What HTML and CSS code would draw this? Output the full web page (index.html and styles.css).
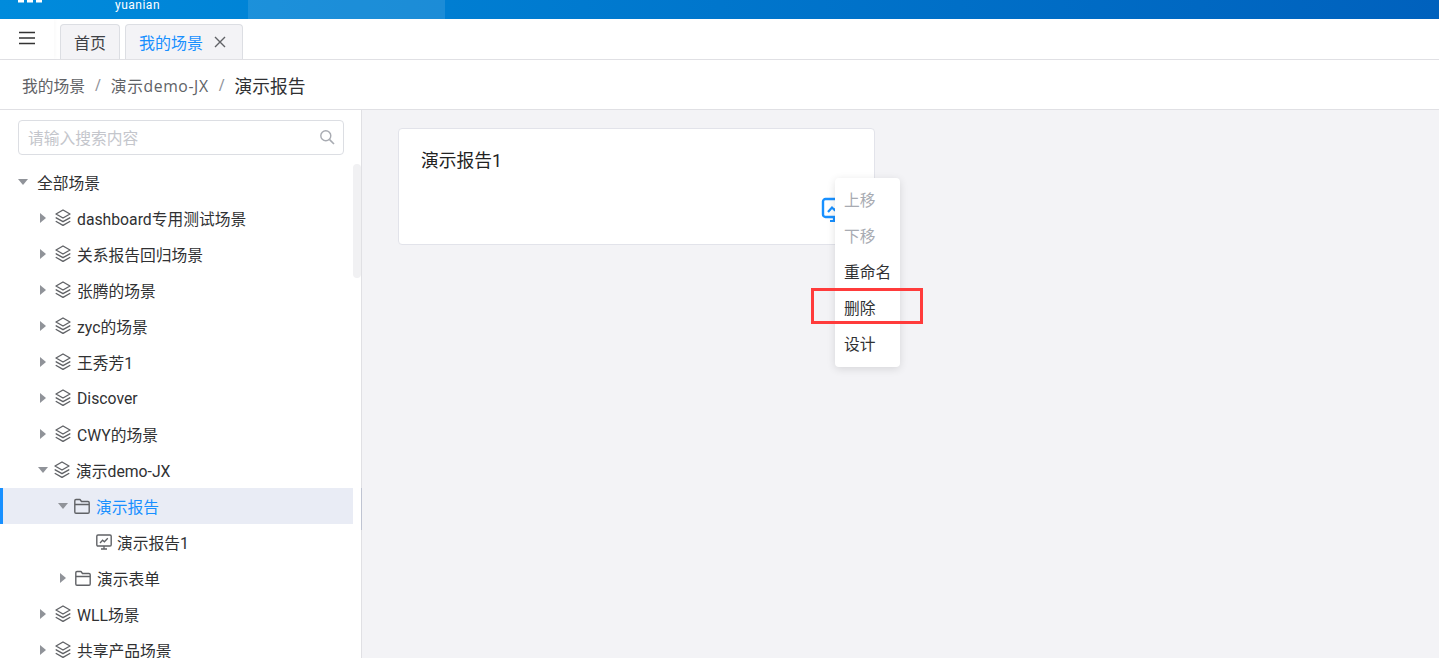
FILE: index.html
```html
<!DOCTYPE html>
<html lang="zh-CN">

<head>
  <meta charset="UTF-8" />
  <meta name="viewport" content="width=device-width, initial-scale=1.0" />
  <title>我的场景</title>
  <link rel="stylesheet" href="styles.css">
</head>

<body>
  <svg class="defs" width="0" height="0">
    <symbol id="layers" viewBox="0 0 16 18">
      <path d="M8 1 15 5 8 9 1 5Z" fill="none" stroke="currentColor" stroke-width="1.4" stroke-linejoin="round" />
      <path d="M1.200 8.800 8 12.700 14.800 8.800M1.200 12.500 8 16.400 14.800 12.500" fill="none" stroke="currentColor" stroke-width="1.4" stroke-linecap="round" stroke-linejoin="round" />
    </symbol>
    <symbol id="folder" viewBox="0 0 16 18">
      <path d="M.8 3.800C.8 3 1.300 2.500 2 2.500H6L7.500 4.500H14C14.700 4.500 15.200 5 15.200 5.700V15C15.200 15.700 14.700 16.200 14 16.200H2C1.300 16.200 .8 15.700 .8 15ZM.8 7.500H15.200" fill="none" stroke="currentColor" stroke-width="1.4" stroke-linejoin="round" />
    </symbol>
    <symbol id="report" viewBox="0 0 16 18">
      <rect x=".8" y="2" width="14.400" height="11" rx="1.200" fill="none" stroke="currentColor" stroke-width="1.400" />
      <path d="M4 10 6.600 7.200 8.400 8.800 11.800 5.200M5 16H11M8 13V16" fill="none" stroke="currentColor" stroke-width="1.300" />
    </symbol>
  </svg>

  <!-- top bar, page is scrolled so only the bottom of it shows -->
  <header class="topbar">
    <svg class="logo" width="24" height="3" viewBox="0 0 24 3">
      <path d="M0 0H6V2.500H0ZM9 0H15V2.500H9ZM18 0H24V2.500H18Z" fill="#fff" />
    </svg>
    <div class="brand">yuanian</div>
    <div class="topnav"><span>智能分析平台</span></div>
  </header>

  <div class="tabbar">
    <div class="menu-btn">
      <svg width="16" height="14" viewBox="0 0 16 14">
        <path d="M0 1.500H16M0 7H16M0 12.500H16" stroke="#333" stroke-width="1.600" />
      </svg>
    </div>
    <div class="tab">首页</div>
    <div class="tab tab-active">我的场景
      <svg class="tab-close" width="12" height="12" viewBox="0 0 12 12">
        <path d="M1 1 11 11M11 1 1 11" stroke="#606266" stroke-width="1.400" />
      </svg>
    </div>
  </div>

  <div class="breadcrumb">
    <span>我的场景</span><i>/</i><span class="crumb-wide">演示demo-JX</span><i>/</i><span class="current">演示报告</span>
  </div>

  <div class="main">
    <aside class="sidebar">
      <div class="search">
        <span>请输入搜索内容</span>
        <svg width="16" height="16" viewBox="0 0 16 16">
          <circle cx="6.800" cy="6.800" r="5" fill="none" stroke="#a8abb2" stroke-width="1.400" />
          <path d="M10.600 10.600 15 15" stroke="#a8abb2" stroke-width="1.600" />
        </svg>
      </div>

      <ul class="tree">
        <li class="row lv0"><b class="arrow down"></b>全部场景</li>
        <li class="row lv1"><b class="arrow"></b><svg class="ico"><use href="#layers" /></svg>dashboard专用测试场景</li>
        <li class="row lv1"><b class="arrow"></b><svg class="ico"><use href="#layers" /></svg>关系报告回归场景</li>
        <li class="row lv1"><b class="arrow"></b><svg class="ico"><use href="#layers" /></svg>张腾的场景</li>
        <li class="row lv1"><b class="arrow"></b><svg class="ico"><use href="#layers" /></svg>zyc的场景</li>
        <li class="row lv1"><b class="arrow"></b><svg class="ico"><use href="#layers" /></svg>王秀芳1</li>
        <li class="row lv1"><b class="arrow"></b><svg class="ico"><use href="#layers" /></svg>Discover</li>
        <li class="row lv1"><b class="arrow"></b><svg class="ico"><use href="#layers" /></svg>CWY的场景</li>
        <li class="row lv1"><b class="arrow down"></b><svg class="ico"><use href="#layers" /></svg>演示demo-JX</li>
        <li class="row lv2 selected"><b class="arrow down"></b><svg class="ico"><use href="#folder" /></svg>演示报告</li>
        <li class="row lv3"><svg class="ico"><use href="#report" /></svg>演示报告1</li>
        <li class="row lv2"><b class="arrow"></b><svg class="ico"><use href="#folder" /></svg>演示表单</li>
        <li class="row lv1"><b class="arrow"></b><svg class="ico"><use href="#layers" /></svg>WLL场景</li>
        <li class="row lv1"><b class="arrow"></b><svg class="ico"><use href="#layers" /></svg>共享产品场景</li>
      </ul>

      <div class="scrollbar"></div>
      <div class="collapse">
        <svg width="8" height="14" viewBox="0 0 8 14">
          <path d="M6 1.500 2 7 6 12.500" fill="none" stroke="#fff" stroke-width="2" />
        </svg>
      </div>
    </aside>

    <section class="content">
      <div class="card">
        <div class="card-title">演示报告1</div>
        <svg class="card-icon" width="26" height="26" viewBox="0 0 26 26">
          <rect x="2" y="2" width="22" height="18" rx="2.500" fill="none" stroke="#1890ff" stroke-width="2.400" />
          <path d="M7 15 11 10.500 13.500 13 18 8M9 24H17M13 20V24" fill="none" stroke="#1890ff" stroke-width="2.200" />
        </svg>
      </div>

      <ul class="popmenu">
        <li class="disabled">上移</li>
        <li class="disabled">下移</li>
        <li>重命名</li>
        <li>删除</li>
        <li>设计</li>
      </ul>
      <div class="redbox"></div>
    </section>
  </div>
</body>

</html>
```

FILE: styles.css
```css
/* Reset some default styles */
* {
    margin: 0;
    padding: 0;
    box-sizing: border-box;
}

html,
body {
    height: 100%;
    overflow: hidden;
}

body {
    display: flex;
    flex-direction: column;
    background-color: #fff;
    color: #303133;
    font-family: Roboto, "Noto Sans CJK SC", sans-serif;
    font-size: 15.75px;
}

.defs {
    position: absolute;
}

/* Top bar */
.topbar {
    height: 19px;
    flex: none;
    display: flex;
    align-items: flex-end;
    overflow: hidden;
    background: linear-gradient(90deg, #008bdc 0%, #0076cc 50%, #0061bd 100%);
    color: #fff;
}

.logo {
    align-self: flex-start;
    margin-left: 18px;
}

.brand {
    width: 206px;
    padding-left: 73px;
    padding-bottom: 7px;
    font-size: 12px;
    line-height: 14px;
    letter-spacing: 0.5px;
}

.topnav {
    width: 197px;
    height: 19px;
    background-color: rgba(255, 255, 255, 0.11);
    text-align: center;
}

.topnav span {
    display: block;
    margin-top: -23px;
    line-height: 24px;
    font-size: 15px;
}

/* Tabs */
.tabbar {
    height: 41px;
    flex: none;
    display: flex;
    align-items: flex-end;
    border-bottom: 1px solid #e0e0e4;
}

.menu-btn {
    width: 54px;
    height: 40px;
    margin-right: 6px;
    display: flex;
    justify-content: center;
    align-items: center;
    padding-bottom: 3px;
    padding-right: 1px;
    box-shadow: 2px 0 3px rgba(0, 0, 0, 0.02);
}

.tab {
    height: 35px;
    margin-right: 5px;
    padding: 0 13px;
    display: flex;
    align-items: center;
    gap: 11px;
    background-color: #f3f3f6;
    border: 1px solid #dcdee3;
    border-bottom: none;
    border-radius: 4px 4px 0 0;
    color: #404246;
    font-size: 16px;
}

.tab-active {
    color: #1890ff;
    padding-right: 16px;
}

/* Breadcrumb */
.breadcrumb {
    height: 50px;
    flex: none;
    display: flex;
    align-items: center;
    padding-left: 22px;
    padding-top: 1px;
    border-bottom: 1px solid #e0e0e4;
    color: #606266;
    font-family: "Open Sans", "Noto Sans CJK SC", sans-serif;
}

.breadcrumb i {
    margin: 0 10px;
    font-style: normal;
    color: #8f9299;
}

.breadcrumb .crumb-wide {
    letter-spacing: 0.6px;
}

.breadcrumb .current {
    font-size: 17.75px;
    color: #303133;
}

/* Main area */
.main {
    flex: 1;
    min-height: 0;
    display: flex;
}

.sidebar {
    position: relative;
    width: 362px;
    flex: none;
    padding-top: 10px;
    border-right: 1px solid #e0e0e4;
}

.search {
    height: 35px;
    margin-left: 18px;
    width: 326px;
    padding: 0 8px 1px 9px;
    display: flex;
    align-items: center;
    justify-content: space-between;
    border: 1px solid #dcdee3;
    border-radius: 4px;
    color: #c4c6cc;
}

.tree {
    list-style: none;
    margin-top: 9px;
    width: 353px;
}

.row {
    height: 36px;
    display: flex;
    align-items: center;
    white-space: nowrap;
    color: #303133;
}

.lv0 {
    padding-left: 18px;
}

.lv1 {
    padding-left: 40px;
}

.lv2 {
    padding-left: 60px;
}

.lv3 {
    padding-left: 96px;
}

.arrow {
    width: 0;
    height: 0;
    margin-right: 9px;
    border-style: solid;
    border-width: 5px 0 5px 6px;
    border-color: transparent transparent transparent #909399;
}

.arrow.down {
    margin-left: -2px;
    margin-right: 6px;
    border-width: 6px 5.500px 0 5.500px;
    border-color: #909399 transparent transparent transparent;
}

.lv0 .arrow.down {
    margin-left: 0;
    margin-right: 9px;
}

.ico {
    width: 16px;
    height: 18px;
    margin-right: 6px;
    color: #606266;
    flex: none;
}

.lv3 .ico {
    margin-right: 5px;
}

.selected {
    background-color: #e9ecf5;
    box-shadow: inset 3px 0 0 #1890ff;
    color: #1890ff;
}

.scrollbar {
    position: absolute;
    top: 54px;
    right: 0;
    width: 8px;
    height: 114px;
    background-color: #f1f1f3;
    border-radius: 4px;
}

.collapse {
    position: absolute;
    top: 378px;
    right: -16px;
    width: 16px;
    height: 42px;
    display: flex;
    align-items: center;
    justify-content: center;
    background-color: #bfc4d2;
    border-radius: 0 6px 6px 0;
}

/* Content */
.content {
    position: relative;
    flex: 1;
    padding: 18px 0 0 36px;
    background-color: #f3f3f6;
}

.card {
    position: relative;
    width: 477px;
    height: 117px;
    padding: 20px 22px;
    background-color: #fff;
    border: 1px solid #e2e3ea;
    border-radius: 4px;
}

.card-title {
    font-size: 17.75px;
    line-height: 24px;
    color: #222;
}

.card-icon {
    position: absolute;
    right: 27px;
    bottom: 21px;
}

.popmenu {
    position: absolute;
    left: 473px;
    top: 68px;
    width: 65px;
    padding: 4px 0 5px;
    list-style: none;
    background-color: #fff;
    border-radius: 4px;
    box-shadow: 0 2px 8px rgba(0, 0, 0, 0.12);
    color: #303133;
}

.popmenu li {
    height: 36px;
    line-height: 38px;
    padding-left: 9px;
    white-space: nowrap;
}

.popmenu .disabled {
    color: #a8abb2;
}

.redbox {
    position: absolute;
    left: 449px;
    top: 178px;
    width: 112px;
    height: 36px;
    border: 3px solid #ff3b3b;
}
```
